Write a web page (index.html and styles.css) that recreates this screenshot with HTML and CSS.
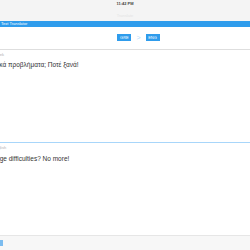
FILE: index.html
```html
<!DOCTYPE html>
<html lang="el">
<head>
    <meta charset="UTF-8">
    <meta name="viewport" content="width=device-width, initial-scale=1.0">
    <title>Text Translator</title>
    <link rel="stylesheet" href="styles.css">
</head>
<body>

    <!-- status bar -->
    <div class="status-bar">
        <div class="clock">11:42 PM</div>
        <div class="nav-ghost">Translate</div>
    </div>

    <!-- app title -->
    <div class="title-bar">Text Translator</div>

    <!-- language switch -->
    <div class="lang-bar">
        <span class="lang-btn">GRE</span>
        <span class="chevron">&gt;</span>
        <span class="lang-btn">ENG</span>
    </div>

    <!-- source -->
    <div class="pane source">
        <div class="pane-label">Greek</div>
        <div class="pane-text">Γλωσσικά προβλήματα; Ποτέ ξανά!</div>
    </div>

    <!-- result -->
    <div class="pane result">
        <div class="pane-label">English</div>
        <div class="pane-text">Language difficulties? No more!</div>
    </div>

    <!-- toolbar -->
    <div class="tool-bar">
        <span class="tool-icon"></span>
    </div>

</body>
</html>
```

FILE: styles.css
```css
* {
    margin: 0;
    padding: 0;
    box-sizing: border-box;
}

body {
    width: 250px;
    height: 250px;
    overflow: hidden;
    background: #fff;
    font-family: "Liberation Sans", "Noto Sans", sans-serif;
    display: flex;
    flex-direction: column;
}

/* 状态栏 */
.status-bar {
    height: 21px;
    background: #f4f4f4;
    text-align: center;
    padding-top: 2px;
}

.clock {
    font-size: 4px;
    font-weight: bold;
    color: #444;
    line-height: 4px;
}

.nav-ghost {
    margin-top: 8px;
    font-size: 4px;
    line-height: 4px;
    color: #e4e4e4;
}

/* 标题栏 */
.title-bar {
    height: 6px;
    background: #2f9cec;
    color: #fff;
    font-size: 4px;
    line-height: 6px;
    padding-left: 1px;
    white-space: nowrap;
}

/* 语言切换 */
.lang-bar {
    height: 23px;
    display: flex;
    align-items: center;
    justify-content: center;
    padding-left: 27px;
    padding-bottom: 2px;
    border-bottom: 1px solid #dedede;
}

.lang-btn {
    width: 14px;
    height: 7px;
    background: #2f9cec;
    color: #fff;
    font-size: 4px;
    line-height: 7px;
    text-align: center;
}

.chevron {
    margin: 0 5px;
    color: #b8dcf8;
    font-size: 7px;
    line-height: 7px;
}

/* 文本区 */
.pane {
    overflow: hidden;
    white-space: nowrap;
}

.source {
    height: 93px;
    border-bottom: 1px solid #a8d6fa;
}

.result {
    flex: 1;
}

.pane-label {
    margin-top: 2px;
    padding-left: 1px;
    font-size: 4px;
    line-height: 5px;
    color: #b0b0b0;
    text-indent: -8px;
}

.pane-text {
    margin-top: 4px;
    font-size: 6.5px;
    line-height: 8px;
    color: #333;
}

.source .pane-text {
    text-indent: -22px;
}

.result .pane-text {
    margin-top: 5px;
    font-size: 6.5px;
    text-indent: -22px;
}

/* 工具栏 */
.tool-bar {
    height: 15px;
    background: #f7f7f7;
    border-top: 1px solid #e6e6e6;
    display: flex;
    align-items: center;
}

.tool-icon {
    width: 3px;
    height: 6px;
    background: #7cbcef;
}
```
